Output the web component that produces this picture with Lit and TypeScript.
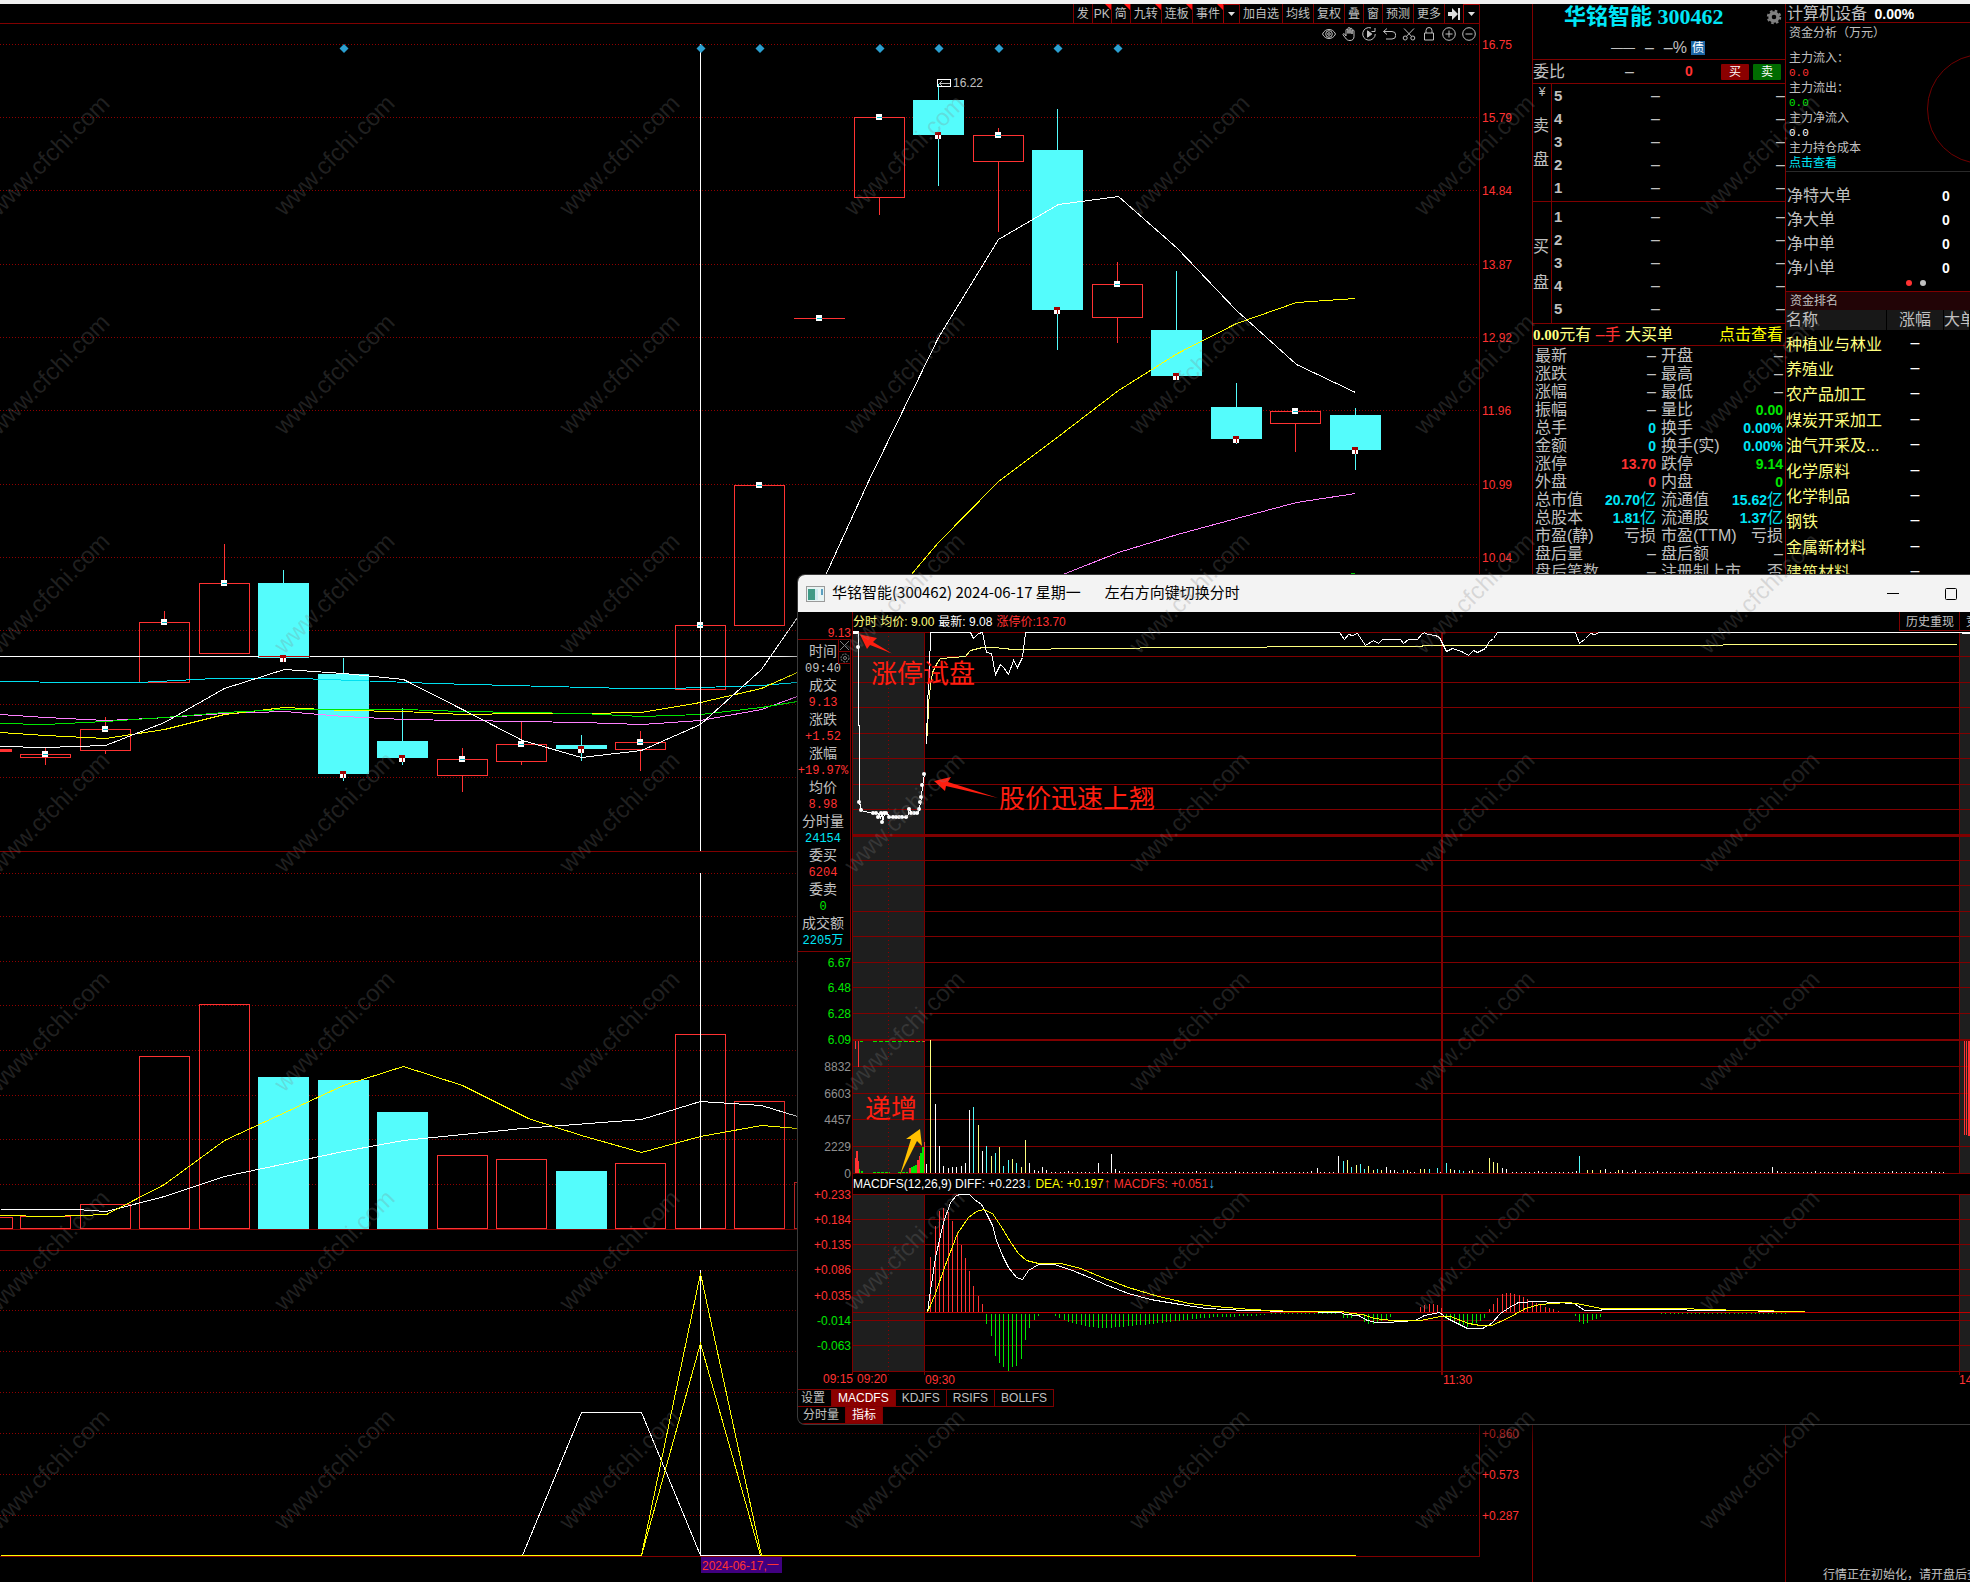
import { LitElement, html, svg, css } from "lit";
import { customElement, state } from "lit/decorators.js";

const CYAN = "#54fcfc";
const RED = "#ff3232";
const GRID = "#800000";

type Pt = [number, number];
// Points sit on pixel centres so that one-pixel strokes stay crisp.
const pts = (list: Pt[]) => list.map(([x, y]) => `${x + 0.5},${y + 0.5}`).join(" ");
const line = (list: Pt[], cls: string) => svg`<polyline class="ln ${cls}" points=${pts(list)}></polyline>`;

/* ---------- daily chart ---------- */

const cx = (i: number) => Math.round(45 + 59.54 * i);

// [up?, body top, body bottom, wick top, wick bottom]
const CANDLES: [boolean, number, number, number, number][] = [
  [true, 754, 757, 748, 765],
  [true, 729, 750, 717, 754],
  [true, 622, 682, 611, 682],
  [true, 583, 653, 544, 653],
  [false, 583, 658, 570, 658],
  [false, 674, 774, 658, 781],
  [false, 741, 758, 708, 765],
  [true, 759, 775, 748, 792],
  [true, 744, 761, 722, 765],
  [false, 745, 749, 735, 761],
  [true, 742, 749, 731, 771],
  [true, 625, 689, 625, 689],
  [true, 485, 625, 485, 625],
  [true, 318, 318, 318, 318],
  [true, 117, 197, 117, 215],
  [false, 100, 135, 84, 186],
  [true, 135, 161, 128, 232],
  [false, 150, 310, 109, 350],
  [true, 284, 317, 262, 343],
  [false, 330, 376, 271, 376],
  [false, 407, 439, 383, 444],
  [true, 411, 423, 409, 452],
  [false, 415, 450, 408, 470],
];

const VOLUMES: [boolean, number][] = [
  [true, 1216], [true, 1204], [true, 1056], [true, 1004], [false, 1077], [false, 1080], [false, 1112],
  [true, 1155], [true, 1159], [false, 1171], [true, 1163], [true, 1034], [true, 1101], [true, 1182],
];

const PRICE_AXIS: [number, string][] = [
  [44, "16.75"], [117, "15.79"], [190, "14.84"], [264, "13.87"], [337, "12.92"], [410, "11.96"],
  [484, "10.99"], [557, "10.04"], [630, ""], [704, ""], [777, ""],
];
const VOLUME_ROWS = [873, 916, 961, 1005, 1050, 1095, 1139, 1184];
const SIGNAL_AXIS: [number, string][] = [
  [1270, ""], [1310, ""], [1351, ""], [1392, ""], [1433, "+0.860"], [1474, "+0.573"], [1515, "+0.287"],
];
const DIAMONDS = [5, 11, 12, 14, 15, 16, 17, 18];

const MA5: Pt[] = [[0, 746], [45, 747], [105, 745], [164, 722], [224, 688], [284, 669], [343, 673], [403, 679], [462, 709], [522, 740], [581, 757], [641, 750], [700, 724], [761, 669], [797, 617], [825, 575], [868, 481], [938, 337], [998, 239], [1058, 204], [1118, 196], [1177, 248], [1236, 310], [1296, 364], [1355, 392]];
const MA10: Pt[] = [[0, 732], [45, 735], [105, 738], [164, 729], [224, 714], [284, 707], [343, 710], [403, 711], [462, 714], [522, 713], [581, 713], [641, 712], [700, 702], [761, 688], [797, 672], [910, 575], [938, 542], [998, 481], [1058, 436], [1118, 390], [1177, 353], [1236, 323], [1296, 302], [1355, 298]];
const MA20: Pt[] = [[0, 714], [45, 717], [105, 720], [150, 718], [224, 713], [284, 711], [343, 716], [403, 719], [462, 720], [522, 721], [581, 722], [641, 724], [700, 720], [761, 709], [797, 696], [1060, 575], [1118, 552], [1177, 534], [1236, 518], [1296, 502], [1355, 493]];
const MA30: Pt[] = [[0, 723], [45, 724], [105, 721], [164, 717], [224, 712], [284, 709], [343, 709], [403, 709], [462, 711], [522, 712], [581, 713], [641, 716], [700, 714], [761, 707], [797, 701], [1300, 580], [1355, 573]];
const MA60: Pt[] = [[0, 681], [76, 682], [138, 682], [214, 678], [298, 678], [383, 681], [434, 683], [510, 685], [628, 688], [671, 688], [700, 687], [761, 685], [797, 682]];
const VOL5: Pt[] = [[0, 1215], [51, 1216], [106, 1214], [164, 1184], [224, 1140], [343, 1085], [403, 1066], [462, 1085], [528, 1118], [581, 1135], [641, 1152], [700, 1136], [761, 1125], [797, 1128]];
const VOL10: Pt[] = [[0, 1209], [76, 1209], [106, 1211], [164, 1196], [224, 1176], [343, 1151], [403, 1140], [522, 1128], [641, 1119], [700, 1101], [761, 1105], [797, 1116]];

const dotted = (y: number) => svg`<line class="dot" x1="0" x2="1478" y1=${y + 0.5} y2=${y + 0.5}></line>`;
const rule = (y: number, x2 = 1479) => svg`<line class="grid" x1="0" x2=${x2} y1=${y + 0.5} y2=${y + 0.5}></line>`;

const candle = ([up, top, bottom, hi, lo]: [boolean, number, number, number, number], i: number) => {
  const x = cx(i);
  const color = up ? RED : CYAN;
  const body = !up
    ? svg`<rect x=${x - 25} y=${top} width="51" height=${bottom - top} fill=${CYAN}></rect>`
    : bottom > top
      ? svg`<rect x=${x - 24.5} y=${top + 0.5} width="50" height=${bottom - top} fill="none" stroke=${RED}></rect>`
      : svg`<rect x=${x - 25} y=${top} width="51" height="1" fill=${RED}></rect>`;
  const marker = up
    ? svg`<rect x=${x - 3} y=${top - 3} width="6" height="6" fill="#fff"></rect><rect x=${x - 2} y=${top} width="5" height="1" fill="#00b8c8"></rect>`
    : svg`<rect x=${x - 3} y=${bottom - 3} width="6" height="3" fill="#a00000"></rect><rect x=${x - 3} y=${bottom} width="6" height="4" fill="#fff"></rect><rect x=${x} y=${bottom} width="1" height="4" fill="#a00000"></rect>`;
  return svg`
    <line x1=${x + 0.5} x2=${x + 0.5} y1=${hi} y2=${top} stroke=${color}></line>
    <line x1=${x + 0.5} x2=${x + 0.5} y1=${bottom} y2=${lo} stroke=${color}></line>
    ${body}${marker}`;
};

const volumeBar = ([up, top]: [boolean, number], i: number) => {
  const x = cx(i);
  return up
    ? svg`<rect x=${x - 24.5} y=${top + 0.5} width="50" height=${1228 - top} fill="none" stroke=${RED}></rect>`
    : svg`<rect x=${x - 25} y=${top} width="51" height=${1229 - top} fill=${CYAN}></rect>`;
};

/* ---------- intraday chart ---------- */

const INTRADAY_ROWS = [632, 656, 682, 707, 733, 758, 784, 809, 860, 885, 911, 936, 962, 987, 1013, 1066, 1093, 1119, 1146, 1173, 1194, 1219, 1244, 1269, 1295, 1312, 1320, 1345, 1371];

const INTRADAY_AXIS: [number, string, string][] = [
  [632, "9.13", "r"], [962, "6.67", "g"], [987, "6.48", "g"], [1013, "6.28", "g"], [1039, "6.09", "g"],
  [1066, "8832", "n"], [1093, "6603", "n"], [1119, "4457", "n"], [1146, "2229", "n"], [1173, "0", "n"],
  [1194, "+0.233", "r"], [1219, "+0.184", "r"], [1244, "+0.135", "r"], [1269, "+0.086", "r"], [1295, "+0.035", "r"],
  [1320, "-0.014", "g"], [1345, "-0.063", "g"],
];

const AUCTION: Pt[] = [[854, 632], [858, 632], [858, 647], [858, 725], [859, 725], [859, 802], [861, 810], [872, 813], [878, 813], [880, 817], [882, 813], [882, 822], [884, 813], [887, 813], [889, 817], [907, 817], [909, 809], [912, 813], [918, 813], [919, 808], [920, 802], [921, 797], [922, 785], [924, 774]];
const AUCTION_DOTS: Pt[] = [[858, 647], [859, 802], [861, 810], [873, 813], [876, 813], [878, 817], [881, 813], [882, 822], [884, 813], [886, 813], [889, 817], [893, 817], [896, 817], [899, 817], [902, 817], [906, 817], [909, 809], [911, 813], [914, 813], [917, 813], [919, 809], [920, 802], [921, 797], [922, 785], [924, 774]];
const PRICE: Pt[] = [[926, 744], [927, 703], [929, 670], [930, 632], [970, 632], [973, 638], [978, 633], [982, 632], [986, 652], [991, 653], [995, 674], [1000, 664], [1003, 667], [1008, 674], [1013, 660], [1017, 667], [1022, 657], [1025, 632], [1339, 632], [1344, 639], [1348, 634], [1352, 635], [1357, 633], [1365, 645], [1373, 640], [1378, 643], [1382, 639], [1400, 639], [1403, 643], [1408, 639], [1417, 639], [1421, 634], [1424, 632], [1427, 634], [1435, 635], [1439, 637], [1446, 651], [1452, 648], [1461, 651], [1468, 655], [1473, 650], [1477, 652], [1485, 648], [1489, 641], [1493, 638], [1497, 632], [1575, 632], [1579, 643], [1585, 638], [1590, 633], [1594, 634], [1599, 632], [1970, 632]];
const AVERAGE: Pt[] = [[927, 735], [928, 703], [930, 685], [932, 672], [937, 662], [940, 658], [953, 657], [965, 656], [970, 650], [982, 647], [993, 647], [1013, 649], [1090, 648], [1190, 647], [1344, 646], [1500, 645], [1957, 644]];
const DIFF: Pt[] = [[927, 1312], [930, 1290], [935, 1257], [943, 1222], [950, 1202], [956, 1195], [960, 1194], [969, 1194], [974, 1199], [981, 1204], [987, 1215], [992, 1225], [996, 1240], [1002, 1255], [1008, 1267], [1016, 1277], [1022, 1279], [1028, 1270], [1038, 1264], [1054, 1264], [1072, 1270], [1089, 1277], [1107, 1285], [1128, 1293], [1150, 1299], [1180, 1304], [1206, 1308], [1245, 1310], [1293, 1311], [1341, 1312], [1344, 1314], [1358, 1315], [1367, 1320], [1376, 1322], [1387, 1322], [1415, 1320], [1424, 1315], [1439, 1312], [1447, 1318], [1467, 1328], [1482, 1328], [1491, 1323], [1500, 1313], [1509, 1307], [1518, 1302], [1537, 1301], [1555, 1302], [1574, 1303], [1584, 1310], [1599, 1310], [1603, 1309], [1663, 1309], [1709, 1310], [1805, 1311]];
const DEA: Pt[] = [[927, 1312], [935, 1293], [944, 1267], [957, 1233], [968, 1217], [976, 1211], [983, 1209], [992, 1213], [1000, 1225], [1011, 1243], [1018, 1253], [1026, 1260], [1038, 1263], [1061, 1263], [1080, 1268], [1102, 1277], [1128, 1287], [1158, 1296], [1189, 1303], [1215, 1306], [1250, 1309], [1293, 1311], [1341, 1311], [1351, 1313], [1362, 1314], [1374, 1318], [1392, 1320], [1420, 1320], [1440, 1316], [1450, 1316], [1468, 1323], [1480, 1325], [1491, 1325], [1507, 1318], [1525, 1308], [1539, 1304], [1567, 1302], [1576, 1303], [1601, 1308], [1677, 1308], [1741, 1310], [1805, 1311]];

// [x, height, colour key]
const TRADES: [number, number, string][] = [
  [926, 9, "w"], [930, 133, "y"], [935, 69, "w"], [939, 27, "w"], [943, 7, "w"], [948, 5, "w"], [952, 6, "w"], [956, 6, "w"],
  [961, 7, "w"], [965, 10, "w"], [969, 63, "w"], [973, 66, "c"], [978, 48, "y"], [982, 22, "w"], [986, 27, "c"], [991, 17, "y"],
  [995, 20, "c"], [999, 26, "y"], [1003, 7, "c"], [1008, 13, "c"], [1012, 14, "y"], [1016, 10, "c"], [1021, 6, "y"], [1025, 33, "y"],
  [1029, 10, "w"], [1034, 3, "w"], [1038, 2, "w"], [1042, 6, "w"], [1046, 3, "w"], [1098, 10, "w"], [1111, 19, "w"], [1115, 4, "w"],
  [1317, 5, "w"], [1338, 17, "w"], [1343, 12, "c"], [1347, 13, "y"], [1351, 6, "c"], [1356, 8, "y"], [1360, 9, "c"], [1364, 4, "c"],
  [1368, 7, "y"], [1373, 3, "y"], [1377, 4, "c"], [1381, 3, "y"], [1386, 6, "w"], [1390, 3, "w"], [1394, 3, "w"], [1403, 3, "c"],
  [1407, 3, "y"], [1420, 4, "y"], [1424, 4, "y"], [1429, 4, "c"], [1437, 5, "c"], [1446, 10, "c"], [1450, 4, "y"], [1454, 3, "w"],
  [1459, 3, "c"], [1463, 2, "c"], [1472, 3, "y"], [1489, 15, "y"], [1493, 11, "y"], [1497, 10, "y"], [1502, 5, "w"], [1506, 4, "w"],
  [1579, 17, "c"], [1587, 3, "y"], [1592, 3, "y"], [1600, 3, "y"], [1605, 4, "w"], [1618, 3, "y"], [1622, 3, "w"], [1635, 3, "w"],
  [1772, 6, "w"],
];
const TRADE_COLORS: Record<string, string> = { w: "#fff", y: "#ffff80", c: CYAN };
const QUIET = Array.from({ length: 210 }, (_, i) => Math.round(1051 + i * 4.27))
  .filter((x) => x < 1946 && !TRADES.some((t) => Math.abs(t[0] - x) < 3))
  .map((x, i) => [x, i % 9 === 4 ? 2 : 1] as Pt);

const HIST_UP: Pt[] = [[930, 1257], [935, 1226], [939, 1211], [943, 1208], [948, 1212], [952, 1221], [957, 1232], [961, 1245], [965, 1258], [969, 1271], [973, 1286], [978, 1296], [982, 1304], [1420, 1307], [1424, 1305], [1429, 1304], [1433, 1304], [1437, 1305], [1441, 1308], [1489, 1309], [1493, 1304], [1497, 1298], [1502, 1294], [1506, 1293], [1510, 1293], [1514, 1294], [1519, 1295], [1523, 1297], [1527, 1299], [1532, 1301], [1536, 1303], [1540, 1305], [1545, 1307], [1549, 1308], [1553, 1309], [1558, 1311]];
const HIST_DOWN: Pt[] = [[986, 1323], [991, 1335], [995, 1355], [999, 1362], [1003, 1366], [1008, 1370], [1012, 1366], [1016, 1365], [1021, 1358], [1025, 1339], [1029, 1327], [1034, 1319], [1038, 1315], [1343, 1317], [1347, 1317], [1351, 1317], [1356, 1315], [1364, 1321], [1368, 1323], [1373, 1323], [1377, 1321], [1381, 1320], [1386, 1318], [1390, 1316], [1446, 1318], [1450, 1319], [1454, 1321], [1459, 1323], [1463, 1324], [1467, 1326], [1472, 1324], [1476, 1322], [1480, 1320], [1484, 1317], [1575, 1315], [1579, 1321], [1583, 1323], [1587, 1322], [1592, 1319], [1596, 1318], [1600, 1316]];
const FADE: Pt[] = [[1055, 1315], [1064, 1319], [1072, 1322], [1080, 1324], [1089, 1326], [1107, 1327], [1120, 1326], [1141, 1324], [1167, 1321], [1193, 1318], [1219, 1316], [1250, 1315], [1267, 1314]];
const fadeAt = (x: number) => {
  const k = Math.max(1, FADE.findIndex((p) => p[0] >= x));
  const [a, b] = [FADE[k - 1], FADE[k]];
  return Math.round(a[1] + ((b[1] - a[1]) * (x - a[0])) / (b[0] - a[0]));
};
const HIST_FADE: Pt[] = Array.from({ length: 50 }, (_, i) => Math.round(1055 + i * 4.27)).filter((x) => x < 1267).map((x) => [x, fadeAt(x)]);
const HIST_FLAT = [
  ...Array.from({ length: 16 }, (_, i) => Math.round(1271 + i * 4.27)),
  ...Array.from({ length: 30 }, (_, i) => Math.round(1661 + i * 4.27)),
];

// [x, height, rising?]
const RISE: [number, number, boolean][] = [[909, 5, true], [911, 6, false], [913, 7, false], [915, 8, false], [917, 13, true], [919, 17, true], [920, 20, false], [922, 26, false]];

/* ---------- side panels ---------- */

type Cell = [string, string, string];
const STATS: [Cell, Cell][] = [
  [["最新", "–", ""], ["开盘", "–", ""]],
  [["涨跌", "–", ""], ["最高", "–", ""]],
  [["涨幅", "–", ""], ["最低", "–", ""]],
  [["振幅", "–", ""], ["量比", "0.00", "g"]],
  [["总手", "0", "c"], ["换手", "0.00%", "c"]],
  [["金额", "0", "c"], ["换手(实)", "0.00%", "c"]],
  [["涨停", "13.70", "r"], ["跌停", "9.14", "g"]],
  [["外盘", "0", "r"], ["内盘", "0", "g"]],
  [["总市值", "20.70亿", "c"], ["流通值", "15.62亿", "c"]],
  [["总股本", "1.81亿", "c"], ["流通股", "1.37亿", "c"]],
  [["市盈(静)", "亏损", ""], ["市盈(TTM)", "亏损", ""]],
  [["盘后量", "–", ""], ["盘后额", "–", ""]],
  [["盘后笔数", "–", ""], ["注册制上市", "否", ""]],
];
const SECTORS = ["种植业与林业", "养殖业", "农产品加工", "煤炭开采加工", "油气开采及...", "化学原料", "化学制品", "钢铁", "金属新材料", "建筑材料"];
const MENU: [string, boolean][] = [["发", false], ["PK", true], ["简", true], ["九转", true], ["连板", true], ["事件", true]];
const MENU_MORE = ["加自选", "均线", "复权", "叠", "窗", "预测", "更多"];
const TIP: [string, string, string][] = [
  ["时间", "09:40", ""], ["成交", "9.13", "r"], ["涨跌", "+1.52", "r"], ["涨幅", "+19.97%", "r"], ["均价", "8.98", "r"],
  ["分时量", "24154", "c"], ["委买", "6204", "r"], ["委卖", "0", "g"], ["成交额", "2205万", "c"],
];

const TOOLS: [string, unknown][] = [
  ["显示", svg`<path d="M0.5 7C2 3.8 4.300 2.500 7 2.500S12 3.800 13.500 7C12 10.200 9.700 11.500 7 11.500S2 10.200 .5 7Z"></path><circle cx="7" cy="7" r="3.300"></circle><circle cx="7" cy="7" r="1.300"></circle>`],
  ["平移", svg`<path d="M4 9V3.200a1 1 0 0 1 2 0V6.500V1.500a1 1 0 0 1 2 0V6.500V2.200a1 1 0 0 1 2 0V7V4a1 1 0 0 1 2 0V9.500C12 12 10.500 13.500 8 13.500S4.500 12.500 3.500 11L1 7.800C.6 6.800 2 6.300 2.600 7L4 9"></path>`],
  ["播放", svg`<path d="M9 .9A6.300 6.300 0 1 0 13.300 7"></path><path d="M13 1v3.500h-3.500"></path><path d="M5.500 3.800L9.800 7L5.500 10.200Z" fill="#c0c0c0"></path>`],
  ["撤销", svg`<path d="M5 1.500L1.500 4.500L5 7.500M1.500 4.500H10A3.500 3.500 0 0 1 10 12H4"></path>`],
  ["剪切", svg`<path d="M2 1.500L9.700 9.500M12 1.500L4.300 9.500"></path><circle cx="3.200" cy="11" r="2"></circle><circle cx="10.800" cy="11" r="2"></circle>`],
  ["锁定", svg`<path d="M2.500 6H11.500V13H2.500ZM4 6V3.500a3 3 0 0 1 6 0V6"></path>`],
  ["放大", svg`<circle cx="7" cy="7" r="6.300"></circle><path d="M7 3.500V10.500M3.500 7H10.500"></path>`],
  ["缩小", svg`<circle cx="7" cy="7" r="6.300"></circle><path d="M3.500 7H10.500"></path>`],
];

const number = (value: string) => {
  const m = value.match(/^([\d.%]+)(\D*)$/);
  return m ? html`<b>${m[1]}</b>${m[2]}` : value;
};

const palette = css`
  .r { color: #ff3232; fill: #ff3232; }
  .g { color: #00e600; fill: #00e600; }
  .c { color: #00e6f6; fill: #00e6f6; }
  .y { color: #ffff80; fill: #ffff80; }
  .n { color: #808080; fill: #909090; }
  .w { color: #fff; fill: #fff; }
  button, a { font: inherit; color: inherit; text-decoration: none; }
  a.c { color: #00e6f6; }
  button { background: none; border: 0; margin: 0; padding: 0; cursor: pointer; white-space: nowrap; }
  svg { display: block; }
  .ln { fill: none; stroke-width: 1; }
  .grid { stroke: #800000; }
  .l-white { stroke: #fff; }
  .l-yellow { stroke: #ffff00; }
  .l-pale { stroke: #ffff80; }
  .l-pink { stroke: #ff80ff; }
  .l-green { stroke: #00e600; }
  .l-cyan { stroke: #00e0f0; }
  text { font-size: 12px; }
`;

@customElement("daily-chart")
export class DailyChart extends LitElement {
  static styles = [palette, css`
    :host { display: block; position: relative; min-width: 0; }
    .bar { display: flex; justify-content: flex-end; height: 19px; margin-right: 52px; border-bottom: 1px solid #800000; border-right: 1px solid #800000; }
    .bar button { position: relative; padding: 0 3px; border-left: 1px solid #800000; font-size: 12px; line-height: 21px; }
    .bar .tight { padding: 0 1px; }
    .bar .drop { width: 16px; display: grid; place-items: center; border: 1px solid #a00000; border-width: 1px 0 0 1px; }
    .bar .next { width: 19px; display: grid; place-items: center; }
    .hot::after { content: ""; position: absolute; right: 0; top: 0; border: 3px solid #ff1414; border-left-color: transparent; border-bottom-color: transparent; }
    .tools { position: absolute; right: 53px; top: 20px; display: flex; }
    .tools button { width: 20px; height: 20px; display: grid; place-items: center; }
    .tools svg { fill: none; stroke: #c0c0c0; }
    .plot { width: 100%; height: auto; }
    .dot { stroke: #900000; stroke-dasharray: 1 2; }
  `];

  render() {
    return html`
      <nav class="bar">
        ${MENU.map(([t, hot]) => html`<button class=${(hot ? "hot" : "") + (t === "PK" ? " tight" : "")}>${t}</button>`)}
        <button class="drop" aria-label="事件菜单"><svg width="7" height="4"><path d="M0 0H7L3.500 4Z" fill="#e0e0e0"></path></svg></button>
        ${MENU_MORE.map((t) => html`<button>${t}</button>`)}
        <button class="next" aria-label="下一页"><svg width="12" height="12" fill="#e0e0e0"><path d="M0 4H4V0L10 6L4 12V8H0Z"></path><rect x="10" width="2" height="12"></rect></svg></button>
        <button class="drop" aria-label="更多菜单"><svg width="7" height="4"><path d="M0 0H7L3.500 4Z" fill="#e0e0e0"></path></svg></button>
      </nav>
      <svg class="plot" viewBox="0 24 1532 1558">
        <g shape-rendering="crispEdges">
          ${PRICE_AXIS.map(([y]) => dotted(y))}
          ${VOLUME_ROWS.map(dotted)}
          ${SIGNAL_AXIS.map(([y]) => dotted(y))}
          ${[851, 1229, 1250, 1556].map((y) => rule(y))}
          <line class="grid" x1="1479.5" x2="1479.5" y1="24" y2="1557"></line>
          <rect x="0" y="749" width="12" height="3" fill=${RED}></rect>
          <rect x="-20" y="1217.500" width="32" height="11" fill="none" stroke=${RED}></rect>
          ${CANDLES.map(candle)}
          ${VOLUMES.map(volumeBar)}
          ${line(MA60, "l-cyan")}${line(MA20, "l-pink")}${line(MA10, "l-yellow")}${line(MA30, "l-green")}${line(MA5, "l-white")}
          ${line(VOL10, "l-white")}${line(VOL5, "l-yellow")}
          <line x1="0" x2="797" y1="656.500" y2="656.500" stroke="#fff"></line>
          <line x1="259" x2="310" y1="656.500" y2="656.500" stroke="#c00000"></line>
          ${[[44, 851], [873, 1229], [1270, 1556]].map(([a, b]) => svg`<line x1="700.5" x2="700.5" y1=${a} y2=${b} stroke="#fff"></line>`)}
          ${line([[522, 1555], [581, 1412], [641, 1412], [700, 1555], [761, 1555]], "l-white")}
          ${line([[0, 1555], [641, 1555], [700, 1273], [761, 1555], [1355, 1555]], "l-yellow")}
          ${line([[641, 1555], [700, 1343], [760, 1555]], "l-yellow")}
          <rect x="937.500" y="79.500" width="13" height="7" fill="none" stroke="#fff"></rect>
          <path d="M939 83.500H950M939 83.500L942 81.500M939 83.500L942 85.500" stroke="#c0c0c0" fill="none"></path>
        </g>
        ${DIAMONDS.map((i) => svg`<path fill="#2b9fd0" d=${`M${cx(i) + 1} 44L${cx(i) + 5.5} 48.500L${cx(i) + 1} 53L${cx(i) - 3.5} 48.500Z`}></path>`)}
        <text x="953" y="87" fill="#c0c0c0">16.22</text>
        ${[...PRICE_AXIS, ...SIGNAL_AXIS].map(([y, t]) => (t ? svg`<text class="r" x="1482" y=${y + 5}>${t}</text>` : ""))}
        <rect x="701" y="1557" width="81" height="16" fill="#400080"></rect>
        <text class="r" x="702" y="1570">2024-06-17,一</text>
      </svg>
      <div class="tools">
        ${TOOLS.map(([name, art]) => html`<button aria-label=${name}><svg width="14" height="14">${art}</svg></button>`)}
      </div>`;
  }
}

@customElement("quote-panel")
export class QuotePanel extends LitElement {
  static styles = [palette, css`
    :host { display: block; border-left: 1px solid #800000; font-size: 16px; white-space: nowrap; }
    header { position: relative; height: 55px; border-bottom: 1px solid #800000; }
    h1 { margin: 0; height: 27px; padding-left: 31px; font: bold 22px/26px "Liberation Serif", "Noto Sans CJK SC", serif; color: #00e6f6; }
    .gear { position: absolute; right: 3px; top: 5px; }
    .sub { display: flex; justify-content: flex-end; align-items: center; gap: 10px; height: 28px; padding: 6px 80px 0 0; box-sizing: border-box; }
    .sub small { font-size: 12px; }
    .tag { background: #1c66a4; color: #fff; font-size: 12px; line-height: 14px; padding: 0 1px; margin-left: -6px; }
    .ratio { display: grid; grid-template-columns: 88px 32px 56px 28px 28px; column-gap: 4px; align-items: center; height: 23px; line-height: 21px; border-bottom: 1px solid #800000; }
    .ratio button { height: 16px; font-size: 12px; line-height: 16px; color: #fff; border-radius: 1px; }
    .ratio b { font-size: 14px; text-align: center; }
    .ratio .buy { background: #8b0000; }
    .ratio .sell { background: #006b00; }
    .depth { display: flex; border-bottom: 1px solid #800000; }
    .side { width: 18px; display: flex; flex-direction: column; gap: 20px; line-height: 16px; border-right: 1px solid #800000; }
    .asks .side { gap: 18px; }
    .bids .side { padding-top: 37px; }
    .side small { font-size: 12px; text-align: center; }
    table { border-collapse: collapse; width: 100%; table-layout: fixed; }
    td, th { padding: 0; font-weight: normal; text-align: right; }
    .depth table { flex: 1; }
    .depth td, .depth th { line-height: 23px; height: 23px; }
    .depth th { width: 18px; text-align: left; padding-left: 2px; font-weight: bold; font-size: 15px; }
    .depth .price { width: 88px; }
    .asks table { margin-bottom: 2px; }
    .bids table { margin: 3px 0; }
    .deal { display: flex; justify-content: space-between; height: 21px; line-height: 21px; padding-right: 2px; border-bottom: 1px solid #800000; }
    .deal b { font: bold 15px "Liberation Serif", serif; }
    .deal a { color: #ffff00; }
    .stats { margin-top: 1px; }
    .stats td, .stats th { height: 18px; line-height: 18px; padding-right: 3px; }
    .stats th { text-align: left; padding: 0 0 0 2px; width: 62px; }
    .stats td:last-child { padding-right: 2px; }
    .stats b { font-size: 14px; }
  `];

  private ladder(levels: number[]) {
    return html`<table><tbody>${levels.map((n) => html`<tr><th scope="row">${n}</th><td class="price">–</td><td>–</td></tr>`)}</tbody></table>`;
  }

  render() {
    return html`
      <header>
        <h1>华铭智能 300462</h1>
        <button class="gear" aria-label="设置"><svg width="16" height="16" viewBox="-8 -8 16 16"><circle r="4" fill="none" stroke="#808080" stroke-width="3.400"></circle><circle r="6.200" fill="none" stroke="#808080" stroke-width="2" stroke-dasharray="2.600 2.270"></circle></svg></button>
        <div class="sub"><small>——</small><span>–</span><span>–%</span><span class="tag">债</span></div>
      </header>
      <div class="ratio"><span>委比</span><span>–</span><b class="r">0</b><button class="buy">买</button><button class="sell">卖</button></div>
      <section class="depth asks"><div class="side"><small>¥</small><span>卖</span><span>盘</span></div>${this.ladder([5, 4, 3, 2, 1])}</section>
      <section class="depth bids"><div class="side"><span>买</span><span>盘</span></div>${this.ladder([1, 2, 3, 4, 5])}</section>
      <div class="deal"><span class="y"><b>0.00</b>元有 <span class="r">–手</span> 大买单</span><a href="#deals">点击查看</a></div>
      <table class="stats"><tbody>
        ${STATS.map((row) => html`<tr>${row.map(([k, v, c]) => html`<th scope="row">${k}</th><td class=${c}>${number(v)}</td>`)}</tr>`)}
      </tbody></table>`;
  }
}

@customElement("fund-panel")
export class FundPanel extends LitElement {
  static styles = [palette, css`
    :host { display: flex; flex-direction: column; border-left: 1px solid #800000; overflow: hidden; font-size: 16px; white-space: nowrap; }
    h2 { margin: 0; height: 18px; font-size: 16px; font-weight: normal; line-height: 19px; padding-left: 1px; border-bottom: 1px solid #800000; }
    h2 b { font-size: 14px; color: #fff; margin-left: 3px; }
    .flow { position: relative; height: 149px; box-sizing: border-box; padding-left: 3px; font-size: 12px; line-height: 15px; border-bottom: 1px solid #2a2a2a; }
    .flow h3 { margin: 0 0 7px; font-size: 12px; font-weight: normal; line-height: 21px; }
    .flow div.num { font-family: "Liberation Mono", monospace; font-size: 11px; }
    .flow a { display: block; }
    .ring { position: absolute; left: 141px; top: 31px; }
    .nets { display: grid; grid-template-columns: 1fr 28px; line-height: 24px; padding: 12px 0 0 1px; margin: 0; }
    .nets dd { margin: 0; font-weight: bold; font-size: 14px; color: #fff; }
    .dots { display: flex; gap: 8px; justify-content: flex-end; padding: 0 44px 5px 0; border-bottom: 1px solid #800000; }
    .dots button { width: 6px; height: 6px; border-radius: 50%; background: #c0c0c0; }
    .dots .on { background: #ff3232; }
    .rank { margin: 0; padding-left: 4px; font-size: 12px; font-weight: normal; line-height: 19px; height: 18px; background: #220406; }
    table { border-collapse: collapse; width: 100%; height: 274px; table-layout: fixed; color: #ffff80; }
    th, td { padding: 0; font-weight: normal; text-align: left; overflow: hidden; }
    thead tr { height: 20px; }
    thead th { color: #c0c0c0; background: #181818; line-height: 20px; height: 20px; border-right: 1px solid #000; }
    .pct { width: 56px; text-align: center; }
    .big { width: 25px; }
    td.pct { color: #fff; }
    .status { margin-top: auto; padding-left: 37px; font-size: 12px; line-height: 13px; width: 0; }
  `];

  render() {
    return html`
      <h2>计算机设备 <b>0.00%</b></h2>
      <section class="flow">
        <h3>资金分析（万元）</h3>
        <div>主力流入：</div><div class="num r">0.0</div>
        <div>主力流出：</div><div class="num g">0.0</div>
        <div>主力净流入</div><div class="num w">0.0</div>
        <div>主力持仓成本</div><a class="c" href="#cost">点击查看</a>
        <svg class="ring" width="110" height="110"><circle cx="55" cy="55" r="54.500" fill="none" stroke="#700000"></circle></svg>
      </section>
      <dl class="nets">${["净特大单", "净大单", "净中单", "净小单"].map((t) => html`<dt>${t}</dt><dd>0</dd>`)}</dl>
      <div class="dots"><button class="on" aria-label="第一页"></button><button aria-label="第二页"></button></div>
      <h3 class="rank">资金排名</h3>
      <table>
        <thead><tr><th>名称</th><th class="pct">涨幅</th><th class="big">大单</th></tr></thead>
        <tbody>${SECTORS.map((s) => html`<tr><th scope="row">${s}</th><td class="pct">–</td><td></td></tr>`)}</tbody>
      </table>
      <div class="status">行情正在初始化，请开盘后查看</div>`;
  }
}

@customElement("intraday-window")
export class IntradayWindow extends LitElement {
  @state() private indicator = "MACDFS";

  static styles = [palette, css`
    :host { display: block; box-sizing: border-box; background: #000; border: 1px solid #3a3a3a; border-right: 0; border-radius: 8px 0 0 8px; overflow: hidden; box-shadow: 0 10px 22px rgba(0, 0, 0, 0.7); font-size: 12px; white-space: nowrap; }
    .title { display: flex; align-items: center; height: 37px; padding-left: 8px; gap: 7px; background: #f3f3f3; color: #000; font-size: 15px; }
    .title h2 { margin: 0; font: inherit; font-family: "Noto Sans CJK SC", sans-serif; line-height: 33px; height: 37px; flex: 1; display: flex; gap: 24px; }
    .winbtns { display: flex; width: 106px; overflow: hidden; }
    .winbtns button { flex: 0 0 58px; display: grid; place-items: center; height: 37px; }
    .info { display: flex; height: 20px; line-height: 21px; padding-left: 55px; }
    .legend { flex: 1; display: flex; gap: 4px; }
    .modes { display: flex; width: 71px; overflow: hidden; }
    .modes button { flex: none; height: 19px; padding: 0 5px 0 6px; line-height: 20px; border: 1px solid #800000; border-width: 0 0 1px 1px; }
    .plot { position: relative; }
    .chart { width: 100%; height: auto; overflow: visible; }
    .dot { stroke: #900000; stroke-dasharray: 1 3; }
    .note { font-family: "Noto Sans CJK SC", sans-serif; font-size: 26px; fill: #ff1e10; }
    .arrow { font-weight: bold; font-size: 14px; }
    .tip { position: absolute; left: -1px; top: 7px; width: 54px; box-sizing: border-box; padding: 3px 1px 2px 0; border: 1px solid #800000; border-left: 0; background: #000; text-align: center; }
    .tip dl { margin: 0; font-size: 14px; line-height: 17px; }
    .tip dd { margin: 0; height: 17px; line-height: 19px; font-family: "Liberation Mono", "Noto Sans CJK SC", monospace; font-size: 12px; }
    .tip dt { height: 17px; }
    .tipbtns { position: absolute; right: 0; top: 0; }
    .tipbtns button { display: grid; place-items: center; width: 12px; height: 12px; border: 1px solid #800000; border-width: 0 0 1px 1px; }
    .tabs { display: flex; height: 17px; }
    .tabs button { box-sizing: border-box; height: 18px; line-height: 17px; padding: 0 6px; border: 1px solid #800000; margin-right: -1px; }
    .tabs .first { padding: 0 6px 0 3px; border-left: 0; }
    .tabs .wide { padding: 0 6px 0 5px; border-left: 0; }
    .tabs .on { background: #8b0000; color: #fff; }
    .foot { padding-bottom: 1px; }
  `];

  private trade([x, h, c]: [number, number, string]) {
    return svg`<rect x=${x} y=${1173 - h} width="1" height=${h} fill=${TRADE_COLORS[c]}></rect>`;
  }

  private drawing() {
    const bar = (x: number, y: number, h: number, fill: string, w = 1) => svg`<rect x=${x} y=${y} width=${w} height=${h} fill=${fill}></rect>`;
    return svg`
      <g shape-rendering="crispEdges">
        ${[[853, 632, 71, 541], [853, 1194, 71, 177], [1960, 632, 14, 541], [1960, 1194, 14, 177]].map(([x, y, w, h]) => bar(x, y, h, "#1e1e1e", w))}
        ${INTRADAY_ROWS.map((y) => svg`<line class="grid" x1="852" x2="1974" y1=${y + 0.5} y2=${y + 0.5}></line>`)}
        ${bar(852, 834, 3, GRID, 1122)}${bar(852, 1039, 2, GRID, 1122)}
        ${[[612, 1375], [1194, 1375]].map(([a, b]) => bar(852, a, b - a, GRID))}
        ${[924, 1959].map((x) => [bar(x, 632, 541, GRID), bar(x, 1194, 181, GRID)])}
        ${bar(1441, 632, 541, GRID, 2)}${bar(1441, 1194, 181, GRID, 2)}
        ${[[632, 1173], [1194, 1375]].map(([a, b]) => svg`<line class="dot" x1="888.5" x2="888.5" y1=${a} y2=${b}></line>`)}
        ${bar(926, 1312, 1, "#c00000", 1048)}
        ${TRADES.map((t) => this.trade(t))}
        ${QUIET.map(([x, h]) => this.trade([x, h, "w"]))}
        ${HIST_UP.map(([x, y]) => bar(x, y, 1312 - y, RED))}
        ${HIST_DOWN.map(([x, y]) => bar(x, 1314, y - 1313, "#00e600"))}
        ${HIST_FADE.map(([x, y]) => bar(x, 1314, y - 1313, "#00e600"))}
        ${HIST_FLAT.map((x) => bar(x, 1313, 1, "#00e600"))}
        ${bar(855, 1158, 15, RED)}${bar(856, 1151, 22, RED, 2)}${bar(858, 1161, 12, RED)}
        ${bar(859, 1169, 4, "#00e600")}${bar(861, 1171, 2, "#00e600", 2)}
        ${bar(855, 1041, 8, RED)}${bar(858, 1041, 26, RED)}
        <path d="M860 1041.500H863M873 1041.500H890M892 1041.500H924" stroke="#00e600" stroke-dasharray="4 2"></path>
        <path d="M909 1041.500H925" stroke=${RED} stroke-dasharray="2 5"></path>
        <path d="M873 1172.500H890M898 1172.500H908" stroke="#00e600" stroke-dasharray="3 1"></path>
        ${RISE.map(([x, h, up]) => bar(x, 1173 - h, h, up ? RED : "#00e600", 2))}
        ${bar(924, 1142, 31, RED)}
        ${bar(1964, 1041, 94, RED)}${bar(1966, 1041, 94, RED)}${bar(1968, 1041, 95, RED, 6)}
        ${line(AVERAGE, "l-pale")}${line(PRICE, "l-white")}${line(AUCTION, "l-white")}
        ${bar(853, 631, 3, "#fff", 6)}${bar(1962, 632, 2, "#fff", 12)}
        ${line(DIFF, "l-white")}${line(DEA, "l-yellow")}
      </g>
      ${AUCTION_DOTS.map(([x, y]) => svg`<circle cx=${x} cy=${y} r="2" fill="#fff"></circle>`)}
      <path fill="#ff1e10" d="M860 634.500L877 638L873 642L892 653.500L870 645L867 649Z"></path>
      <path fill="#ff1e10" d="M934 781L951 777L948 782L998 798L946 786L945 791Z"></path>
      <path fill="#ffc000" d="M920 1129L906 1139L911 1139L900 1175L917 1141L922 1146Z"></path>
      <text class="note" x="871" y="683">涨停试盘</text>
      <text class="note" x="999" y="808">股价迅速上翘</text>
      <text class="note" x="865" y="1118">递增</text>
      ${INTRADAY_AXIS.map(([y, t, c]) => svg`<text class=${c} text-anchor="end" x="851" y=${y + 5}>${t}</text>`)}
      <text x="853" y="1188"><tspan class="w">MACDFS(12,26,9) DIFF: +0.223</tspan><tspan class="arrow" fill="#40b0e0">↓</tspan><tspan dx="3" fill="#ffff00">DEA: +0.197</tspan><tspan class="arrow r">↑</tspan><tspan dx="3" class="r">MACDFS: +0.051</tspan><tspan class="arrow" fill="#40b0e0">↓</tspan></text>
      <text class="r" x="823" y="1383">09:15</text><text class="r" x="857" y="1383">09:20</text><text class="r" x="925" y="1384">09:30</text>
      <text class="r" x="1443" y="1384">11:30</text><text class="r" x="1959" y="1384">14:57</text>`;
  }

  render() {
    return html`
      <div class="title">
        <svg width="19" height="16"><rect x=".5" y=".5" width="18" height="15" fill="#e8f4f4" stroke="#9a9a9a"></rect><rect x="2" y="3" width="7" height="11" fill="#3f9a86"></rect><rect x="9" y="3" width="3" height="11" fill="#d0eaf0"></rect><rect x="15" y="3" width="2" height="6" fill="#5a9fc0"></rect></svg>
        <h2><span>华铭智能(300462) 2024-06-17 星期一</span><span>左右方向键切换分时</span></h2>
        <div class="winbtns">
          <button aria-label="最小化"><svg width="12" height="12"><rect y="5" width="12" height="1"></rect></svg></button>
          <button aria-label="最大化"><svg width="12" height="12"><rect x=".5" y=".5" width="11" height="11" rx="1" fill="none" stroke="#000"></rect></svg></button>
        </div>
      </div>
      <div class="info">
        <div class="legend"><span class="y">分时 均价: 9.00</span><span class="w">最新: 9.08</span><span class="r">涨停价:13.70</span></div>
        <div class="modes"><button>历史重现</button><button>竞价</button></div>
      </div>
      <div class="plot">
        <svg class="chart" viewBox="798 632 1172 757">${this.drawing()}</svg>
        <div class="tip">
          <dl>${TIP.map(([k, v, c]) => html`<dt>${k}</dt><dd class=${c}>${v}</dd>`)}</dl>
          <div class="tipbtns">
            <button aria-label="关闭"><svg width="9" height="9"><path d="M0 0L9 9M9 0L0 9" stroke="#808080"></path></svg></button>
            <button aria-label="设置"><svg width="10" height="10"><circle cx="5" cy="5" r="4" fill="none" stroke="#808080" stroke-dasharray="2 1"></circle><circle cx="5" cy="5" r="1.500" fill="none" stroke="#808080"></circle></svg></button>
          </div>
        </div>
      </div>
      <div class="tabs">
        <button class="first">设置</button>
        ${["MACDFS", "KDJFS", "RSIFS", "BOLLFS"].map((t) => html`<button class=${t === this.indicator ? "on" : ""} @click=${() => (this.indicator = t)}>${t}</button>`)}
      </div>
      <div class="tabs foot"><button class="wide">分时量</button><button class="on">指标</button></div>`;
  }
}

@customElement("app-root")
export class AppRoot extends LitElement {
  static styles = css`
    :host { display: block; position: relative; min-height: 100vh; overflow: hidden; background: #000; color: #c0c0c0; font-family: "Liberation Sans", "Noto Sans CJK SC", sans-serif; font-size: 12px; }
    .app { display: grid; grid-template-columns: minmax(0, 1fr) 253px 185px; box-sizing: border-box; min-height: 100vh; border-top: 4px solid #f0f0f0; }
    intraday-window { position: absolute; left: 797px; right: 0; top: 574px; }
    .marks { position: absolute; inset: 0; width: 100%; height: 100%; pointer-events: none; }
    .marks text { font-size: 24px; fill: #828282; fill-opacity: 0.25; }
  `;

  render() {
    const marks = [217, 436, 655, 874, 1093, 1312, 1531].flatMap((y) => [-1, 284, 569, 854, 1139, 1424, 1709].map((x) => [x, y]));
    return html`
      <main class="app">
        <daily-chart></daily-chart>
        <quote-panel></quote-panel>
        <fund-panel></fund-panel>
      </main>
      <intraday-window></intraday-window>
      <svg class="marks" aria-hidden="true">
        ${marks.map(([x, y]) => svg`<text transform=${`translate(${x} ${y}) rotate(-45)`}>www.cfchi.com</text>`)}
      </svg>`;
  }
}
